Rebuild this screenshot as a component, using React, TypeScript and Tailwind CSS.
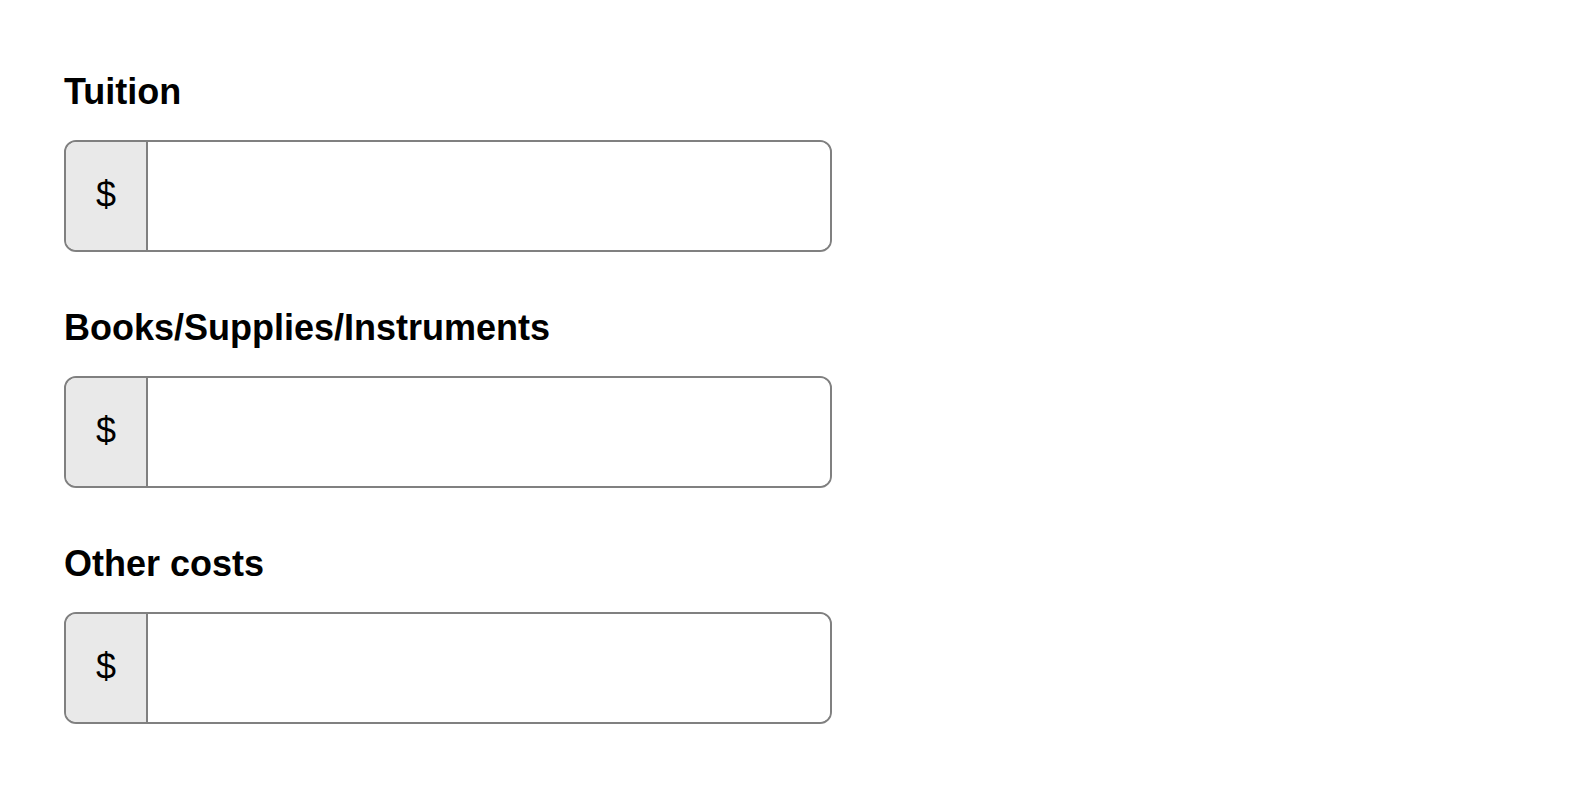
import React from "react";

const fields = ["Tuition", "Books/Supplies/Instruments", "Other costs"];

function MoneyField({ label }: { label: string }) {
  return (
    <div className="mb-[52px]">
      <label className="block text-[36px] leading-[48px] font-bold text-black mb-6">
        {label}
      </label>
      <div className="flex h-[112px] w-[768px] overflow-hidden rounded-[12px] border-2 border-[#808080] bg-white">
        <span className="flex w-[82px] items-center justify-center border-r-2 border-[#808080] bg-[#e9e9e9] pb-[3px] text-[36px] text-black">
          $
        </span>
        <input
          type="text"
          aria-label={label}
          className="flex-1 bg-white px-4 text-[32px] outline-none"
        />
      </div>
    </div>
  );
}

export default function App() {
  return (
    <div
      className="min-h-screen bg-white pl-[64px] pt-[68px]"
      style={{ fontFamily: '"Liberation Sans", Arial, sans-serif' }}
    >
      {fields.map((f) => (
        <MoneyField key={f} label={f} />
      ))}
    </div>
  );
}
